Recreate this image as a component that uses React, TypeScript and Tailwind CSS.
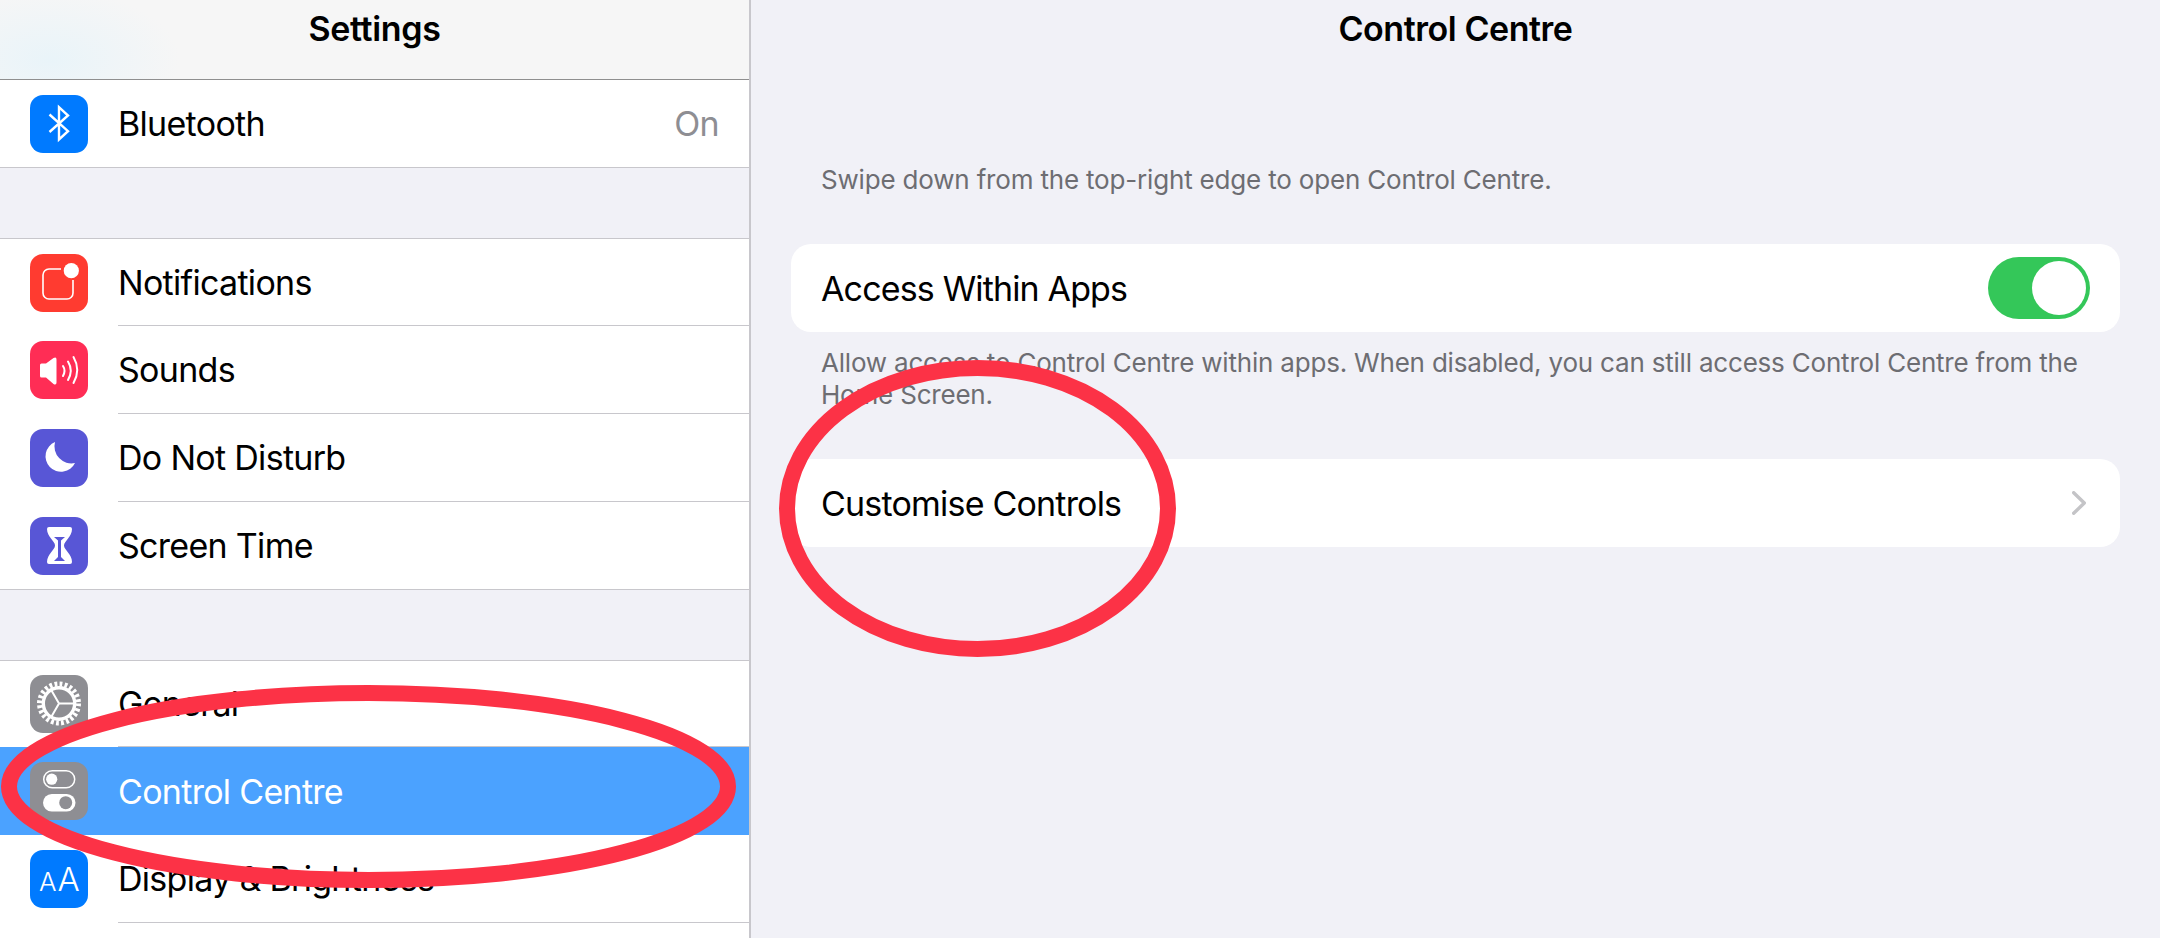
import type { ReactNode } from 'react'

const iconClass = 'flex h-[58px] w-[58px] shrink-0 items-center justify-center self-center rounded-[13px]'

function BluetoothIcon() {
  return (
    <svg viewBox="0 0 58 58" className="h-full w-full" fill="none" stroke="#fff" strokeWidth="2.4" strokeLinejoin="miter">
      <path d="M19.5 19.5 38 36.2l-9 8.3V12.2l9 8.3L19.5 37" />
    </svg>
  )
}

function NotificationsIcon() {
  return (
    <svg viewBox="0 0 58 58" className="h-full w-full" fill="none">
      <path d="M31 15H19a6 6 0 0 0-6 6v18a6 6 0 0 0 6 6h18a6 6 0 0 0 6-6V26" stroke="#fff" strokeWidth="1.6" />
      <circle cx="41.3" cy="16.7" r="7.6" fill="#fff" />
    </svg>
  )
}

function SoundsIcon() {
  return (
    <svg viewBox="0 0 58 58" className="h-full w-full" fill="none">
      <path d="M10 24q0-1.500 1.500-1.500H16l7.500-5.500q3-1.500 3 1.500v23q0 3-3 1.500L16 36.500h-4.500Q10 36.500 10 35z" fill="#fff" />
      <g stroke="#fff" strokeWidth="2" strokeLinecap="round">
        <path d="M33 25q3 4.500 0 10" />
        <path d="M38 20.500q5.500 9 0 18.500" />
        <path d="M43.500 16q7.500 13 0 26" />
      </g>
    </svg>
  )
}

function MoonIcon() {
  return (
    <svg viewBox="0 0 58 58" className="h-full w-full">
      <path d="M25 13A15.500 15.500 0 1 0 45 34 17 17 0 0 1 25 13z" fill="#fff" />
    </svg>
  )
}

function HourglassIcon() {
  return (
    <svg viewBox="0 0 58 58" className="h-full w-full">
      <path
        d="M19 10h21q2 0 2 2c0 8-8 12-8 16.500S42 37 42 45q0 2-2 2H19q-2 0-2-2c0-8 8-12 8-16.500S17 20 17 12q0-2 2-2z"
        fill="#fff"
      />
      <path d="M24 20h11l-4 3.500V40l4 4H24l4-4V23.500z" fill="#5856d6" />
    </svg>
  )
}

function GearIcon() {
  return (
    <svg viewBox="0 0 58 58" className="h-full w-full" fill="none" stroke="#fff">
      <circle cx="29" cy="28.500" r="19.500" strokeWidth="5" strokeDasharray="2.800 2.305" />
      <circle cx="29" cy="28.500" r="15.700" strokeWidth="3.400" />
      <path d="M29 28.500h15M29 28.500l-7.500-13M29 28.500l-7.500 13" strokeWidth="2" />
    </svg>
  )
}

function ControlIcon() {
  return (
    <svg viewBox="0 0 58 58" className="h-full w-full" fill="none">
      <rect x="13.700" y="8.700" width="31" height="17" rx="8.500" stroke="#fff" strokeWidth="1.500" />
      <circle cx="21.700" cy="17.200" r="5.600" fill="#fff" />
      <rect x="13" y="32" width="32.500" height="17.500" rx="8.750" fill="#fff" />
      <circle cx="35.700" cy="40.700" r="6.500" fill="#8e8e93" />
    </svg>
  )
}

function DisplayIcon() {
  return (
    <svg viewBox="0 0 58 58" className="h-full w-full">
      <text x="9" y="41" fontFamily="Inter, sans-serif" fontSize="26" fontWeight="300" fill="#fff">
        A
      </text>
      <text x="27.500" y="41" fontFamily="Inter, sans-serif" fontSize="33" fontWeight="300" fill="#fff">
        A
      </text>
    </svg>
  )
}

type RowProps = {
  icon: ReactNode
  iconBg: string
  label: string
  detail?: string
  last?: boolean
  selected?: boolean
  height?: string
}

function SettingsRow({ icon, iconBg, label, detail, last, selected, height = 'h-[88px]' }: RowProps) {
  return (
    <div className={`flex ${height} ${selected ? 'bg-[#4ba2ff]' : 'bg-white'} ${last ? 'border-b border-[#c8c7cc]' : ''}`}>
      <div className={`${iconClass} ml-[30px] ${iconBg}`}>{icon}</div>
      <div
        className={`ml-[30px] flex flex-1 items-center justify-between pr-[30px] ${
          last || selected ? '' : 'border-b border-[#c8c7cc]'
        }`}
      >
        <span className={`text-[34px] tracking-[-0.7px] ${selected ? 'text-white' : 'text-black'}`}>{label}</span>
        {detail && <span className="text-[34px] tracking-[-0.7px] text-[#8e8e93]">{detail}</span>}
      </div>
    </div>
  )
}

function Sidebar() {
  return (
    <aside className="flex h-full w-[751px] shrink-0 flex-col border-r-2 border-[#c8c7cc] bg-[#f1f1f7]">
      <header className="flex h-[80px] shrink-0 justify-center border-b border-[#8f8f8f] bg-[radial-gradient(ellipse_130px_70px_at_50px_60px,#e9f4f9,#f6f6f6)] pt-[8px]">
        <h1 className="text-[34px] leading-[42px] font-semibold tracking-[-0.35px] text-black">Settings</h1>
      </header>
      <SettingsRow icon={<BluetoothIcon />} iconBg="bg-[#007aff]" label="Bluetooth" detail="On" last />
      <div className="mt-[70px] border-t border-[#c8c7cc]">
        <SettingsRow icon={<NotificationsIcon />} iconBg="bg-[#ff3b30]" label="Notifications" height="h-[87px]" />
        <SettingsRow icon={<SoundsIcon />} iconBg="bg-[#ff2d55]" label="Sounds" />
        <SettingsRow icon={<MoonIcon />} iconBg="bg-[#5856d6]" label="Do Not Disturb" />
        <SettingsRow icon={<HourglassIcon />} iconBg="bg-[#5856d6]" label="Screen Time" last />
      </div>
      <div className="mt-[70px] flex-1 border-t border-[#c8c7cc] bg-white">
        <SettingsRow icon={<GearIcon />} iconBg="bg-[#8e8e93]" label="General" height="h-[86px]" />
        <SettingsRow icon={<ControlIcon />} iconBg="bg-[#8e8e93]" label="Control Centre" selected />
        <SettingsRow icon={<DisplayIcon />} iconBg="bg-[#007aff]" label="Display & Brightness" />
      </div>
    </aside>
  )
}

function Toggle() {
  return (
    <div className="flex h-[62px] w-[102px] items-center justify-end rounded-full bg-[#34c759] pr-[4px]">
      <div className="h-[54px] w-[54px] rounded-full bg-white" />
    </div>
  )
}

function DetailPane() {
  return (
    <main className="flex h-full flex-1 flex-col">
      <header className="flex h-[80px] shrink-0 justify-center pt-[8px]">
        <h2 className="text-[34px] leading-[42px] font-semibold tracking-[-0.45px] text-black">Control Centre</h2>
      </header>
      <div className="flex flex-col pl-[40px] pr-[40px] pt-[84px]">
        <p className="px-[30px] text-[26px] leading-[32px] tracking-[-0.18px] text-[#6d6d72]">
          Swipe down from the top-right edge to open Control Centre.
        </p>
        <div className="mt-[48px] flex h-[88px] items-center justify-between rounded-[20px] bg-white pl-[30px] pr-[30px]">
          <span className="text-[34px] tracking-[-0.85px] text-black">Access Within Apps</span>
          <Toggle />
        </div>
        <p className="mt-[15px] px-[30px] text-[26px] leading-[32px] tracking-[-0.2px] text-[#6d6d72]">
          Allow access to Control Centre within apps. When disabled, you can still access Control Centre from the Home
          Screen.
        </p>
        <div className="mt-[48px] flex h-[88px] items-center justify-between rounded-[20px] bg-white pl-[30px] pr-[34px]">
          <span className="text-[34px] tracking-[-0.8px] text-black">Customise Controls</span>
          <svg viewBox="0 0 14 24" className="h-[24px] w-[14px]" fill="none" stroke="#c4c4c7" strokeWidth="3.4" strokeLinecap="round" strokeLinejoin="round">
            <path d="M1.700 1.700 12.300 12 1.700 22.300" />
          </svg>
        </div>
      </div>
    </main>
  )
}

export default function App() {
  return (
    <div className="relative flex h-[938px] w-[2160px] overflow-hidden bg-[#f1f1f7] font-['Inter',sans-serif]">
      <Sidebar />
      <DetailPane />
      {/* hand drawn markers on top of the screenshot */}
      <svg className="pointer-events-none absolute inset-0 h-full w-full" viewBox="0 0 2160 938" fill="none" stroke="#fc3246" strokeWidth="16">
        <ellipse cx="368.500" cy="786.500" rx="359.500" ry="93.500" />
        <ellipse cx="977.500" cy="508.500" rx="190.500" ry="140.500" />
      </svg>
    </div>
  )
}
